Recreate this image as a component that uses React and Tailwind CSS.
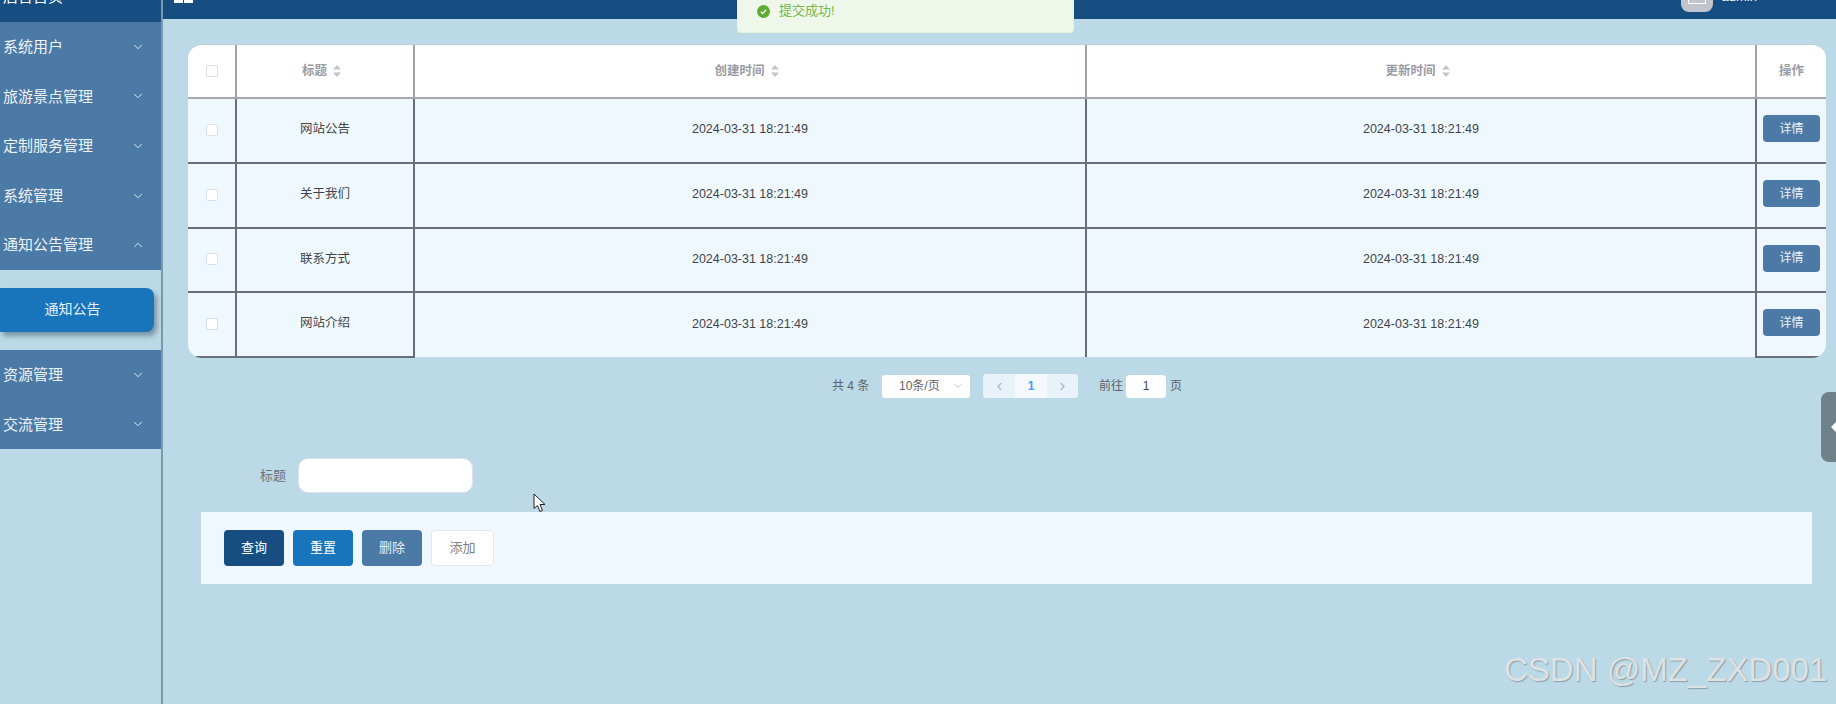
import { ChevronDown, ChevronUp, ChevronLeft, ChevronRight } from "lucide-react";

const font = "font-['Liberation_Sans','Noto_Sans_CJK_SC',sans-serif]";

const menuTop = ["系统用户", "旅游景点管理", "定制服务管理", "系统管理"];
const menuBottom = ["资源管理", "交流管理"];

const rows = [
  { title: "网站公告", h: "h-[65px]" },
  { title: "关于我们", h: "h-[65px]" },
  { title: "联系方式", h: "h-[64px]" },
  { title: "网站介绍", h: "h-[65px]" },
];

function MenuItem({ label, open }) {
  return (
    <div className="flex h-[49.6px] items-center justify-between pl-[3px] pr-[16px] text-[15px] text-[#eef3f7]">
      <span className="mt-[1px]">{label}</span>
      {open ? <ChevronUp size={14} strokeWidth={1.5} /> : <ChevronDown size={14} strokeWidth={1.5} />}
    </div>
  );
}

function SortCaret() {
  return (
    <svg width="8" height="12" viewBox="0 0 8 12" className="ml-[6px]">
      <path d="M4 0 L8 4.5 H0 Z" fill="#c0c4cc" />
      <path d="M4 12 L8 7.5 H0 Z" fill="#c0c4cc" />
    </svg>
  );
}

function Check() {
  return <div className="mx-auto h-3 w-3 rounded-[2px] border border-[#dcdfe6] bg-white" />;
}

function Btn({ children, className }) {
  return (
    <button className={`flex h-9 items-center justify-center rounded-[4px] text-[13px] ${className}`}>
      {children}
    </button>
  );
}

export default function App() {
  return (
    <div className={`relative flex h-[704px] w-[1836px] overflow-hidden bg-[#bbd9e6] ${font}`}>
      {/* Sidebar */}
      <div className="h-full w-[163px] shrink-0 border-r-2 border-[#7d98a8]">
        <div className="flex h-[22px] items-end overflow-hidden bg-[#164e82] pb-[15px] pl-[3px] text-[15px] leading-[20px] text-white">
          后台首页
        </div>
        <div className="bg-[#4c7aa6]">
          {menuTop.map((m) => (
            <MenuItem key={m} label={m} />
          ))}
          <MenuItem label="通知公告管理" open />
        </div>
        <div className="flex h-[80px] items-center">
          <div className="flex h-[44px] w-[154px] items-center justify-center rounded-r-lg bg-[#1874bb] pr-[9px] text-[14px] text-[#e8f1f8] shadow-[3px_4px_5px_rgba(60,80,100,0.5)]">
            通知公告
          </div>
        </div>
        <div className="bg-[#4c7aa6]">
          {menuBottom.map((m) => (
            <MenuItem key={m} label={m} />
          ))}
        </div>
      </div>

      {/* Main */}
      <div className="flex min-w-0 flex-1 flex-col">
        <div className="flex h-[19px] shrink-0 items-start justify-between bg-[#164e82] pl-[11px] pr-[79px]">
          <div className="flex gap-[1px]">
            <div className="h-[3px] w-[9px] bg-white" />
            <div className="h-[3px] w-[9px] bg-white" />
          </div>
          <div className="flex items-start gap-[9px]">
            <div className="relative h-3 w-8 rounded-b-lg bg-[#c0c4cc]">
              <div className="mx-auto h-[4px] w-[18px] border-x border-b border-white" />
            </div>
            <div className="-mt-[10px] text-[13px] leading-[13px] text-white">admin</div>
          </div>
        </div>

        {/* Table */}
        <div className="ml-[25px] mt-[25px] w-[1638px] overflow-hidden rounded-[14px] border-t border-[#c3ccd3]">
          <table className="w-full table-fixed border-collapse text-center text-[12.5px] text-[#3f444b]">
            <colgroup>
              <col className="w-[48px]" />
              <col className="w-[178px]" />
              <col className="w-[672px]" />
              <col className="w-[670px]" />
              <col className="w-[70px]" />
            </colgroup>
            <thead>
              <tr className="h-[53px] border-b-2 border-[#a5a9b3] bg-white text-[#9a9ca5]">
                <th className="border-r-2 border-[#a0a3ab] font-bold">
                  <Check />
                </th>
                <th className="border-r-2 border-[#a0a3ab] font-bold">
                  <span className="flex items-center justify-center pr-[7px]">
                    标题
                    <SortCaret />
                  </span>
                </th>
                <th className="border-r-2 border-[#a0a3ab] font-bold">
                  <span className="flex items-center justify-center pr-[7px]">
                    创建时间
                    <SortCaret />
                  </span>
                </th>
                <th className="border-r-2 border-[#a0a3ab] font-bold">
                  <span className="flex items-center justify-center pr-[7px]">
                    更新时间
                    <SortCaret />
                  </span>
                </th>
                <th className="font-bold">操作</th>
              </tr>
            </thead>
            <tbody>
              {rows.map((r, i) => {
                const last = i === rows.length - 1;
                const line = "border-b-2 border-[#6b6e7a]";
                return (
                  <tr key={r.title} className={`bg-[#f0f8ff] ${r.h}`}>
                    <td className={`border-r-2 border-[#6b6e7a] pb-[2px] ${line}`}>
                      <Check />
                    </td>
                    <td className={`border-r-2 border-[#6b6e7a] pb-[2px] ${line}`}>{r.title}</td>
                    <td className={`border-r-2 border-[#6b6e7a] pb-[2px] ${last ? "" : line}`}>2024-03-31 18:21:49</td>
                    <td className={`border-r-2 border-[#6b6e7a] pb-[2px] ${last ? "" : line}`}>2024-03-31 18:21:49</td>
                    <td className={`pb-[4px] ${line}`}>
                      <button className="mx-auto flex h-[27px] w-[57px] items-center justify-center rounded-[4px] bg-[#4c7aa6] text-[12px] text-[#eef3f7]">
                        详情
                      </button>
                    </td>
                  </tr>
                );
              })}
            </tbody>
          </table>
        </div>

        {/* Pagination */}
        <div className="mt-[16px] flex h-[24px] items-center pl-[669px] text-[12px] text-[#606266]">
          <span className="w-[50px]">共 4 条</span>
          <div className="flex h-[23px] w-[88px] items-center justify-between rounded-[3px] bg-white pl-[17px] pr-[6px]">
            <span>10条/页</span>
            <ChevronDown size={12} className="text-[#c0c4cc]" />
          </div>
          <div className="ml-[13px] flex h-6 overflow-hidden rounded-[3px]">
            <div className="flex w-[32px] items-center justify-center bg-[#e9f2f8] text-[#b0b6bd]">
              <ChevronLeft size={13} />
            </div>
            <div className="flex w-[32px] items-center justify-center bg-[#f5f9fd] font-bold text-[#409eff]">1</div>
            <div className="flex w-[31px] items-center justify-center bg-[#e9f2f8] text-[#b0b6bd]">
              <ChevronRight size={13} />
            </div>
          </div>
          <span className="ml-[21px] w-[27px]">前往</span>
          <div className="flex h-[23px] w-[40px] items-center justify-center rounded-[4px] bg-white text-[#444a52]">1</div>
          <span className="ml-[4px]">页</span>
        </div>

        {/* Search form */}
        <div className="mt-[60px] flex h-[35px] items-center pl-[97px]">
          <span className="w-[38px] text-[13px] text-[#6f7479]">标题</span>
          <div className="h-[35px] w-[175px] rounded-[10px] border border-[#dce3ea] bg-white" />
        </div>

        {/* Action buttons */}
        <div className="ml-[38px] mt-[19px] flex h-[72px] w-[1611px] items-center gap-[9px] bg-[#f0f8ff] pl-[23px]">
          <Btn className="w-[60px] bg-[#164e82] text-white">查询</Btn>
          <Btn className="w-[60px] bg-[#1874bb] text-white">重置</Btn>
          <Btn className="w-[60px] bg-[#4c7aa6] text-[#e8eef4]">删除</Btn>
          <Btn className="w-[63px] border border-[#e4e7ed] bg-white text-[#7d8186]">添加</Btn>
        </div>
      </div>

      {/* Toast */}
      <div className="absolute left-[737px] top-0 flex h-[33px] w-[337px] items-center rounded-b-[4px] border border-t-0 border-[#e1f3d8] bg-[#eef7e9] pb-[10px] pl-[19px] text-[13px] text-[#74b84e]">
        <svg width="13" height="13" viewBox="0 0 13 13" className="mr-[9px]">
          <circle cx="6.5" cy="6.5" r="6.5" fill="#5cac34" />
          <path d="M3.8 6.8 L5.7 8.5 L9.2 4.8" fill="none" stroke="#fff" strokeWidth="1.3" />
        </svg>
        提交成功!
      </div>

      {/* Right drawer tab */}
      <div className="absolute left-[1821px] top-[392px] flex h-[70px] w-[15px] items-center rounded-l-[8px] bg-[#6f8289] pl-[10px]">
        <div className="h-0 w-0 border-y-[5px] border-r-[5px] border-y-transparent border-r-white" />
      </div>

      {/* Mouse cursor */}
      <svg width="14" height="20" viewBox="0 0 14 20" className="absolute left-[533px] top-[493px]">
        <path d="M1 1 V15.5 L4.5 12.5 L7 18.5 L9.5 17.5 L7 11.5 H12 Z" fill="#fff" stroke="#222" strokeWidth="1" />
      </svg>

      {/* Watermark */}
      <div className="absolute left-[1504px] top-[649px] whitespace-nowrap text-[33px] leading-[42px] text-[#dde2e5] [text-shadow:1px_1px_1px_#8f9ea8]">
        CSDN @MZ_ZXD001
      </div>
    </div>
  );
}
